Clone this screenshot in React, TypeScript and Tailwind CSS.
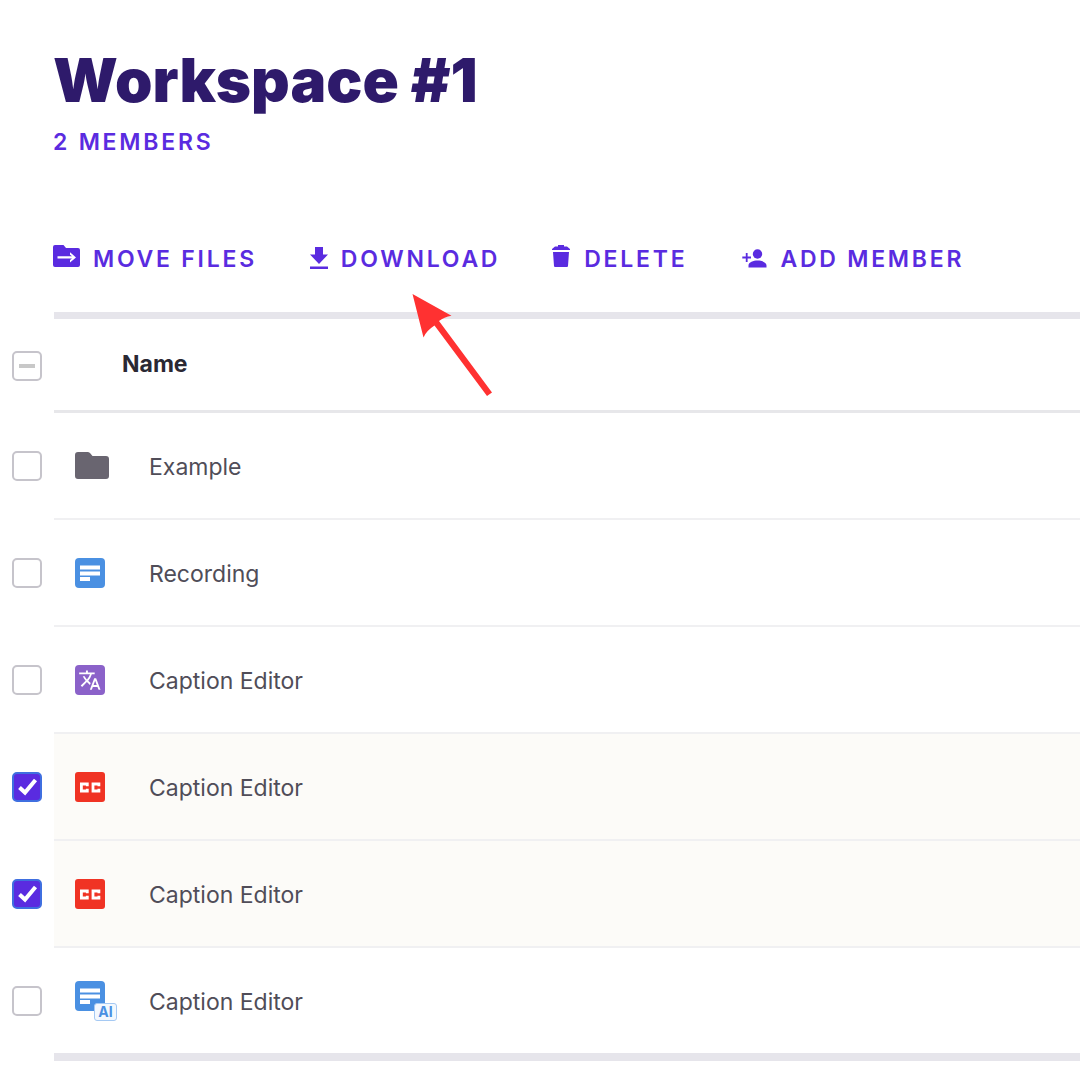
import React, { useEffect, useRef, useState } from "react";

type FileKind = "folder" | "transcript" | "translate" | "caption" | "ai";

type FileRow = {
  id: number;
  name: string;
  kind: FileKind;
};

const files: FileRow[] = [
  { id: 1, name: "Example", kind: "folder" },
  { id: 2, name: "Recording", kind: "transcript" },
  { id: 3, name: "Caption Editor", kind: "translate" },
  { id: 4, name: "Caption Editor", kind: "caption" },
  { id: 5, name: "Caption Editor", kind: "caption" },
  { id: 6, name: "Caption Editor", kind: "ai" },
];

const MoveIcon = () => (
  <svg width="28" height="24" viewBox="0 0 28 24" aria-hidden="true">
    <path
      d="M2 1h8.5l2.500 3h12a2 2 0 0 1 2 2v15a2 2 0 0 1-2 2H2a2 2 0 0 1-2-2V3a2 2 0 0 1 2-2z"
      fill="currentColor"
    />
    <path d="M4.500 12.200h12.500V8.200L23 13.400l-6 5.200v-4H4.500z" fill="#fff" />
    <path d="M17 10.800l2 1.400h-2zM17 16l2-1.400h-2z" fill="currentColor" />
  </svg>
);

const DownloadIcon = () => (
  <svg width="20" height="26" viewBox="1 0 20 26" aria-hidden="true">
    <path d="M7 3h8v7.500h5L11 20 2 10.500h5zM2 22.500h18V25H2z" fill="currentColor" />
  </svg>
);

const TrashIcon = () => (
  <svg width="20" height="24" viewBox="0 0 20 24" aria-hidden="true">
    <path
      d="M6 1h6v1.500h3L18 5v1H0V5l3-2.500h3zM1 8h16l-1 14q-.1 1-1 1H3q-.9 0-1-1z"
      fill="currentColor"
    />
  </svg>
);

const AddMemberIcon = () => (
  <svg width="29" height="24" viewBox="-3 0 29 24" aria-hidden="true">
    <circle cx="15.500" cy="10" r="4.700" fill="currentColor" />
    <path
      d="M6.500 23.500v-2c0-3.500 5-5 9-5s9 1.500 9 5v2zM3.800 9h1.800v3.600h3.400v1.800H5.600V18H3.800v-3.600H.3v-1.800h3.500z"
      fill="currentColor"
    />
  </svg>
);

const FolderIcon = () => (
  <svg width="34" height="28" viewBox="0 0 34 28" aria-hidden="true">
    <path
      d="M3 0h9.500q1.500 0 2.500 1l2.500 3H31a3 3 0 0 1 3 3v17a3 3 0 0 1-3 3H3a3 3 0 0 1-3-3V3a3 3 0 0 1 3-3z"
      fill="#696570"
    />
  </svg>
);

const TranscriptIcon = () => (
  <svg width="30" height="30" viewBox="0 0 30 30" aria-hidden="true">
    <rect width="30" height="30" rx="4" fill="#4a90e2" />
    <path d="M5 7.500H25v4H5zM5 13.500H25v4H5zM5 19h10v4H5z" fill="#fff" />
  </svg>
);

const TranslateIcon = () => (
  <svg width="30" height="30" viewBox="0 0 30 30" aria-hidden="true">
    <rect width="30" height="30" rx="4" fill="#8b62c9" />
    <g transform="translate(3.200 3.500) scale(.97)" fill="#fff">
      <path d="M12.870 15.070l-2.540-2.510.03-.03A17.520 17.520 0 0 0 14.070 6H17V4h-7V2H8v2H1v2h11.170C11.500 7.920 10.440 9.750 9 11.350 8.070 10.320 7.300 9.190 6.690 8h-2c.73 1.630 1.730 3.170 2.980 4.560l-5.090 5.020L4 19l5-5 3.110 3.110.76-2.040zM18.500 10h-2L12 22h2l1.120-3h4.750L21 22h2l-4.500-12zm-2.620 7l1.620-4.330L19.120 17h-3.240z" />
    </g>
  </svg>
);

const CaptionIcon = () => (
  <svg width="30" height="30" viewBox="0 0 30 30" aria-hidden="true">
    <rect width="30" height="30" rx="3" fill="#f03324" />
    <path
      d="M12.300 14.200V12H6.400v7h5.900v-2.200M23.900 14.200V12H18v7h5.900v-2.200"
      fill="none"
      stroke="#fff"
      strokeWidth="2.800"
    />
  </svg>
);

const AiIcon = () => (
  <span className="relative block h-10">
    <TranscriptIcon />
    <span className="absolute top-[22px] left-[19px] flex h-[18px] w-[23px] items-center justify-center rounded-[3px] border border-[#a5c9f3] bg-[#f3f8fe] text-sm font-bold text-[#4a90e2]">
      AI
    </span>
  </span>
);

const kindIcons: Record<FileKind, React.ReactNode> = {
  folder: <FolderIcon />,
  transcript: <TranscriptIcon />,
  translate: <TranslateIcon />,
  caption: <CaptionIcon />,
  ai: <AiIcon />,
};

type CheckboxProps = {
  label: string;
  checked: boolean;
  indeterminate?: boolean;
  onChange: () => void;
};

const Checkbox = ({ label, checked, indeterminate = false, onChange }: CheckboxProps) => {
  const ref = useRef<HTMLInputElement>(null);

  useEffect(() => {
    if (ref.current) ref.current.indeterminate = indeterminate;
  }, [indeterminate]);

  return (
    <label className="relative ml-3 block size-[30px]">
      <input
        ref={ref}
        type="checkbox"
        aria-label={label}
        checked={checked}
        onChange={onChange}
        className="block size-full appearance-none rounded-[5px] border-2 border-[#c6c4cb] bg-white checked:border-[#3f6fe0] checked:bg-[#5a2be0]"
      />
      {indeterminate && (
        <span className="pointer-events-none absolute top-[13px] left-[7px] h-1 w-4 bg-[#c8c8c8]" />
      )}
      {checked && !indeterminate && (
        <svg
          className="pointer-events-none absolute inset-0"
          width="30"
          height="30"
          viewBox="0 0 30 30"
          aria-hidden="true"
        >
          <path d="M7.500 15.500l5.500 5L23.500 8" fill="none" stroke="#fff" strokeWidth="4" />
        </svg>
      )}
    </label>
  );
};

const Action = ({ icon, text }: { icon: React.ReactNode; text: string }) => (
  <button
    type="button"
    className="flex items-start gap-3 text-[23px] leading-[30px] font-semibold tracking-[0.12em] whitespace-nowrap uppercase"
  >
    {icon}
    {text}
  </button>
);

const Pointer = () => (
  <svg
    className="pointer-events-none absolute top-[294px] left-[412px]"
    width="82"
    height="104"
    viewBox="0 0 82 104"
    aria-hidden="true"
  >
    <path
      d="M.5 0L39.500 21.700Q32 23 27 27L80 98.500 75 102 22.500 31.500Q14 37 11.500 43.500z"
      fill="#ff3131"
    />
  </svg>
);

const App = () => {
  const [selected, setSelected] = useState<number[]>([4, 5]);
  const all = selected.length === files.length;

  const toggle = (id: number) =>
    setSelected((prev) => (prev.includes(id) ? prev.filter((x) => x !== id) : [...prev, id]));

  return (
    <main className="relative overflow-hidden bg-white pt-10 pb-4 font-['Inter',sans-serif]">
      <header className="pl-[53px]">
        <h1 className="text-[60px] leading-20 font-black text-[#2e1a6b]">Workspace #1</h1>
        <p className="mt-1 text-[23px] leading-9 font-semibold tracking-[0.12em] text-[#5a2be0]">
          2 MEMBERS
        </p>
      </header>

      <div className="mt-21 flex gap-[52px] pl-[53px] text-[#5a2be0]">
        <Action icon={<MoveIcon />} text="Move files" />
        <Action icon={<DownloadIcon />} text="Download" />
        <Action icon={<TrashIcon />} text="Delete" />
        <Action icon={<AddMemberIcon />} text="Add member" />
      </div>

      <table className="mt-[38px] w-full border-separate border-spacing-0 text-left">
        <thead>
          <tr className="h-[101px]">
            <th className="w-[54px] p-0 pt-[7px]">
              <Checkbox
                label="Select all files"
                checked={all}
                indeterminate={selected.length > 0 && !all}
                onChange={() => setSelected(all ? [] : files.map((f) => f.id))}
              />
            </th>
            <th
              colSpan={2}
              scope="col"
              className="border-t-[7px] border-b-[3px] border-t-[#e6e5eb] border-b-[#e7e7ea] p-0 pl-[68px] text-[23px] font-bold text-[#2a2833]"
            >
              Name
            </th>
          </tr>
        </thead>
        <tbody>
          {files.map((file) => {
            const checked = selected.includes(file.id);
            const cell = checked ? "bg-[#fcfbf8]" : "bg-white";
            return (
              <tr key={file.id} className="group h-[107px] last:h-[113px]">
                <td className="border-b-2 border-transparent p-0 group-last:border-b-8">
                  <Checkbox
                    label={`Select ${file.name}`}
                    checked={checked}
                    onChange={() => toggle(file.id)}
                  />
                </td>
                <td
                  className={`w-[95px] border-b-2 border-[#f0f0f2] p-0 pl-[21px] group-last:border-b-8 group-last:border-[#e6e5eb] [&_svg]:block ${cell}`}
                >
                  {kindIcons[file.kind]}
                </td>
                <td
                  className={`border-b-2 border-[#f0f0f2] p-0 pt-1 text-[23px] text-[#504d58] group-last:border-b-8 group-last:border-[#e6e5eb] ${cell}`}
                >
                  {file.name}
                </td>
              </tr>
            );
          })}
        </tbody>
      </table>

      <Pointer />
    </main>
  );
};

export default App;
